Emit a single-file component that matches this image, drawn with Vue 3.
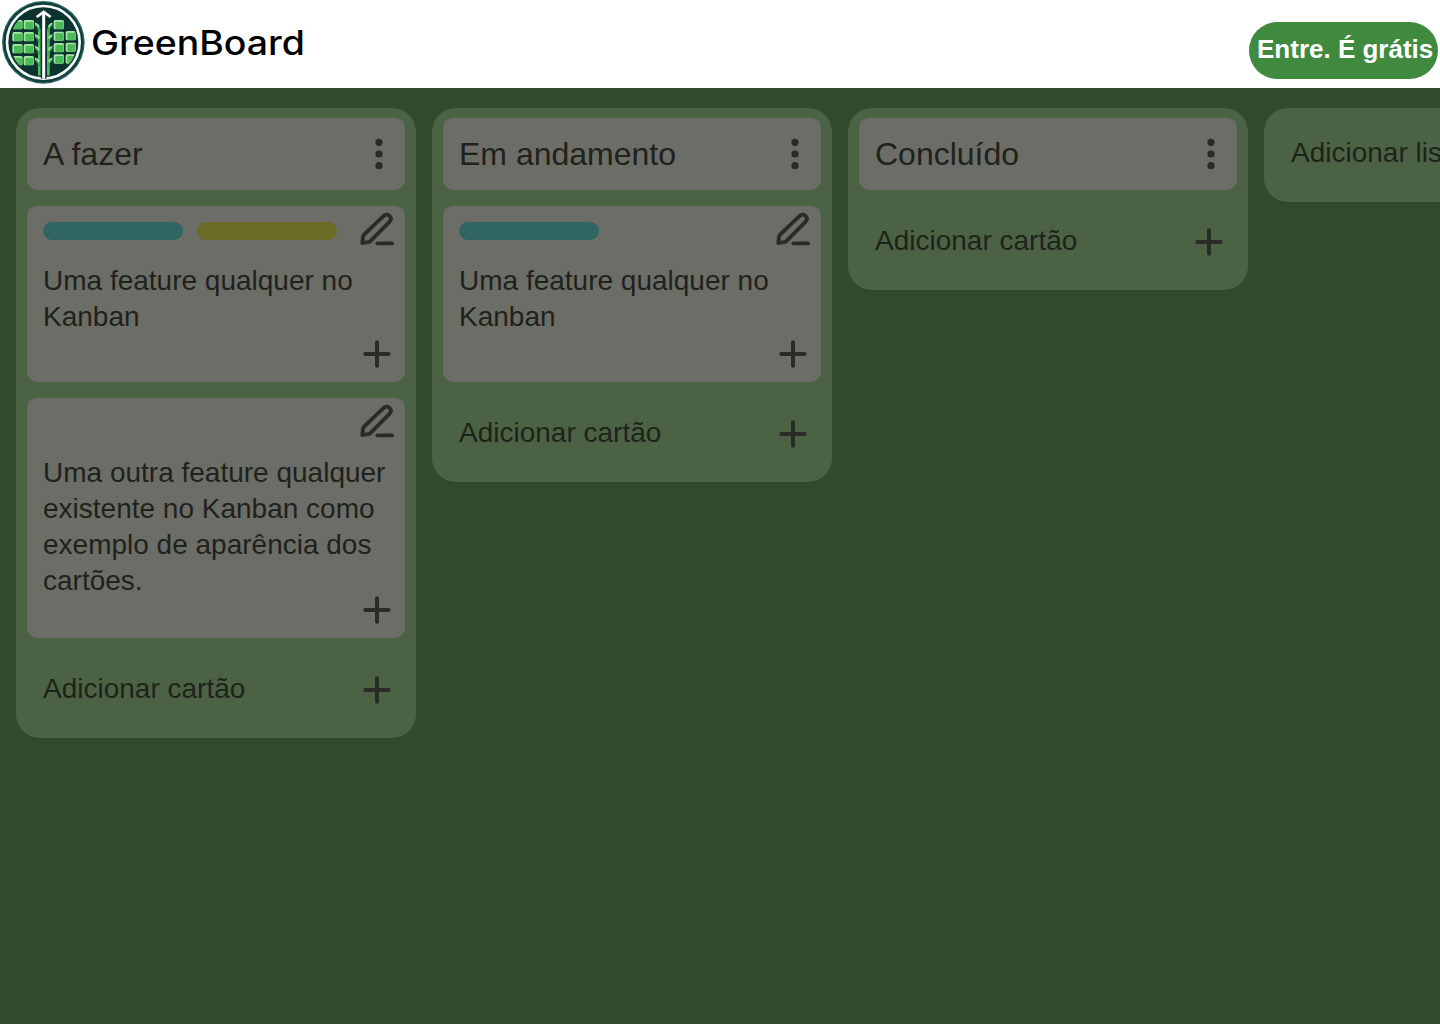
<script setup>
const lists = [
  {
    title: 'A fazer',
    cards: [
      { text: 'Uma feature qualquer no Kanban', tags: ['teal', 'yellow'] },
      { text: 'Uma outra feature qualquer existente no Kanban como exemplo de aparência dos cartões.', tags: [] },
    ],
  },
  {
    title: 'Em andamento',
    cards: [{ text: 'Uma feature qualquer no Kanban', tags: ['teal'] }],
  },
  { title: 'Concluído', cards: [] },
]

const leaves = [
  [37, 60], [37, 96], [37, 132], [37, 168],
  [71, 60], [71, 96], [71, 132], [71, 168],
  [161, 60], [161, 95], [161, 129], [161, 163],
  [197, 93], [197, 128], [197, 163],
]
const branches = [68, 103, 138, 173]
</script>

<template>
  <div class="page">
    <header class="topbar">
      <div class="brand">
        <svg class="emblem" viewBox="0 0 264 264" aria-hidden="true">
          <defs>
            <clipPath id="disc"><circle cx="131" cy="127" r="100" /></clipPath>
          </defs>
          <circle cx="130" cy="127" r="124" fill="#2c6661" />
          <circle cx="130" cy="127" r="120" fill="#103c39" />
          <circle cx="130" cy="127" r="109" fill="#0b3430" stroke="#f3faf5" stroke-width="8" />
          <g clip-path="url(#disc)">
            <g v-for="([x, y], i) in leaves" :key="i">
              <rect :x="x" :y="y" width="31" height="28" rx="5" fill="#a5e6a6" />
              <rect :x="x + 5" :y="y + 5" width="25" height="22" rx="3" fill="#4cba56" />
            </g>
            <g fill="none" stroke-width="8">
              <path d="M118 88V240M145 88V240" stroke="#57bd60" />
              <g v-for="y in branches" :key="y">
                <path :d="`M105 ${y + 5}q12 3 13 22M157 ${y + 5}q-11 3-12 22`" stroke="#43a750" />
                <path :d="`M105 ${y + 2}q9 1 12 11M157 ${y + 2}q-8 1-11 11`" stroke="#b4e8b5" stroke-width="4" />
              </g>
            </g>
          </g>
          <path d="M131 38V236" stroke="#0b3430" stroke-width="17" />
          <path d="M131 36V236" stroke="#fff" stroke-width="9" />
          <path d="M110 51L131 36L152 51" fill="none" stroke="#fff" stroke-width="8" />
        </svg>
        <svg class="wordmark" width="224" height="60" viewBox="0 0 224 60">
          <text x="3" y="42" textLength="214" lengthAdjust="spacingAndGlyphs">GreenBoard</text>
        </svg>
      </div>
      <button class="login">Entre. É grátis</button>
    </header>

    <main class="board">
      <section v-for="list in lists" :key="list.title" class="list">
        <div class="list-head">
          <h2>{{ list.title }}</h2>
          <svg class="dots" width="12" height="36" viewBox="0 0 12 36">
            <circle cx="6" cy="6.3" r="3.6" />
            <circle cx="6" cy="18" r="3.6" />
            <circle cx="6" cy="29.7" r="3.6" />
          </svg>
        </div>

        <article v-for="card in list.cards" :key="card.text" class="card">
          <div class="card-top">
            <div class="tags">
              <span v-for="tag in card.tags" :key="tag" :class="['tag', tag]"></span>
            </div>
            <svg class="icon" width="40" height="40" viewBox="0 0 40 40">
              <path d="M5.3 36L5.9 30.3Q6.1 28.6 7.3 27.4L26.7 8.8C30.9 5.1 36.1 10.5 32.5 14.8L13.6 33.8Q12.5 34.9 10.9 35.2Z" />
              <path d="M20.4 36.4H35" />
            </svg>
          </div>
          <p>{{ card.text }}</p>
          <div class="card-bottom">
            <svg class="icon" width="32" height="32" viewBox="0 0 32 32"><path d="M4.3 16H27.7M16 4.3V27.7" /></svg>
          </div>
        </article>

        <div class="add">
          <span>Adicionar cartão</span>
          <svg class="icon" width="32" height="32" viewBox="0 0 32 32"><path d="M4.3 16H27.7M16 4.3V27.7" /></svg>
        </div>
      </section>
      <section class="list new-list"><span>Adicionar lista</span></section>
    </main>
  </div>
</template>

<style>
body {
  margin: 0;
  overflow: hidden;
}
</style>

<style scoped>
.page {
  display: flex;
  flex-direction: column;
  height: 100vh;
  overflow: hidden;
  background: #32492c;
  color: #20221c;
  font-family: "Liberation Sans", Arial, sans-serif;
}
.topbar {
  display: flex;
  justify-content: space-between;
  height: 88px;
  flex: none;
  background: #fff;
}
.brand {
  display: flex;
}
.emblem {
  width: 88px;
  height: 88px;
}
.wordmark {
  margin-top: 13px;
}
.wordmark text {
  font-family: Inter, sans-serif;
  font-size: 33.5px;
  font-weight: 500;
  fill: #000;
}
.login {
  width: 189px;
  height: 57px;
  margin: 22px 2px 0 0;
  padding: 0 0 2px 8px;
  border: 0;
  border-radius: 29px;
  background: #408a3f;
  color: #fff;
  font: bold 26px "Liberation Sans", Arial, sans-serif;
  white-space: nowrap;
  text-align: left;
}
.board {
  display: flex;
  align-items: flex-start;
  gap: 16px;
  padding: 20px 16px;
}
.list {
  box-sizing: border-box;
  flex: none;
  width: 400px;
  padding: 10px 11px 12px;
  border-radius: 24px;
  background: #4b6344;
}
.list-head {
  display: flex;
  align-items: center;
  justify-content: space-between;
  box-sizing: border-box;
  height: 72px;
  padding: 0 20px 0 16px;
  margin-bottom: 16px;
  border-radius: 10px;
  background: #6c6d67;
}
h2 {
  margin: 0;
  font-size: 32px;
  font-weight: 400;
  line-height: 36px;
}
.dots {
  fill: #2a2b26;
}
.card {
  display: flex;
  flex-direction: column;
  box-sizing: border-box;
  min-height: 176px;
  margin-bottom: 16px;
  padding: 0 12px 12px 16px;
  border-radius: 10px;
  background: #6c6d67;
}
.card-top {
  display: flex;
  justify-content: space-between;
  height: 57px;
  margin-right: -4px;
}
.tags {
  display: flex;
  gap: 14px;
  padding-top: 16px;
}
.tag {
  width: 140px;
  height: 18px;
  border-radius: 9px;
}
.teal {
  background: #2f6663;
}
.yellow {
  background: #6c6b26;
}
.card p {
  margin: 0 -4px 0 0;
  font-size: 28px;
  line-height: 36px;
}
.card-bottom {
  display: flex;
  align-items: flex-end;
  justify-content: flex-end;
  height: 27px;
  margin-top: auto;
}
.icon {
  flex: none;
  fill: none;
  stroke: #2a2b26;
  stroke-width: 4;
  stroke-linecap: round;
  stroke-linejoin: round;
}
.card-top .icon {
  margin-top: 1px;
  stroke-width: 3.8;
}
.add {
  display: flex;
  align-items: center;
  justify-content: space-between;
  height: 72px;
  padding: 0 12px 0 16px;
  font-size: 28px;
  line-height: 36px;
}
.add span {
  margin-top: -2px;
}
.new-list {
  height: 94px;
  padding: 27px;
  font-size: 28px;
  line-height: 36px;
  white-space: nowrap;
}
</style>
